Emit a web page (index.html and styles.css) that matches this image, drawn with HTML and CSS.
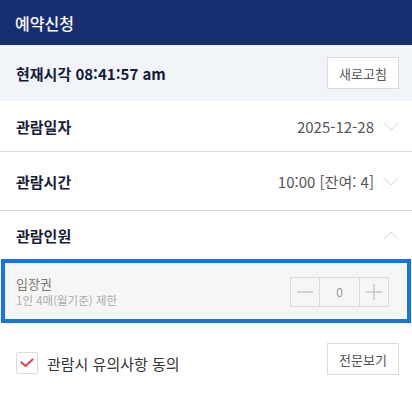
FILE: index.html
```html
<!DOCTYPE html>
<html lang="ko">
<head>
<meta charset="utf-8">
<title>예약신청</title>
<link rel="stylesheet" href="styles.css">
</head>
<body>
<header class="top">예약신청</header>
<div class="clock">
  <span class="clock-text">현재시각 08:41:57 am</span>
  <button class="btn">새로고침</button>
</div>
<div class="row row-date">
  <span class="label">관람일자</span>
  <span class="value">2025-12-28
    <svg class="chev" width="16" height="9" viewBox="0 0 16 9"><polyline points="0.5,0.5 8,8 15.5,0.5" fill="none" stroke="#d4d4d4" stroke-width="1"/></svg>
  </span>
</div>
<div class="row row-time">
  <span class="label">관람시간</span>
  <span class="value">10:00 [잔여: 4]
    <svg class="chev" width="16" height="9" viewBox="0 0 16 9"><polyline points="0.5,0.5 8,8 15.5,0.5" fill="none" stroke="#d4d4d4" stroke-width="1"/></svg>
  </span>
</div>
<div class="row row-people">
  <span class="label">관람인원</span>
  <span class="value">
    <svg class="chev" width="16" height="9" viewBox="0 0 16 9"><polyline points="0.5,8.5 8,1 15.5,8.5" fill="none" stroke="#d4d4d4" stroke-width="1"/></svg>
  </span>
</div>
<div class="ticket">
  <div class="ticket-info">
    <div class="ticket-name">입장권</div>
    <div class="ticket-note">1인 4매(월기준) 제한</div>
  </div>
  <div class="counter">
    <span class="cnt-btn"><svg width="16" height="16" viewBox="0 0 16 16"><line x1="0" y1="8" x2="16" y2="8" stroke="#bdbdbd" stroke-width="1.2"/></svg></span>
    <span class="cnt-val">0</span>
    <span class="cnt-btn"><svg width="16" height="16" viewBox="0 0 16 16"><line x1="0" y1="8" x2="16" y2="8" stroke="#bdbdbd" stroke-width="1.2"/><line x1="8" y1="0" x2="8" y2="16" stroke="#bdbdbd" stroke-width="1.2"/></svg></span>
  </div>
</div>
<div class="agree">
  <label class="agree-check">
    <span class="box"><svg width="14" height="10" viewBox="0 0 14 10"><polyline points="1.5,4.5 5.5,8 12.5,1.5" fill="none" stroke="#d9484c" stroke-width="2.2" stroke-linecap="round" stroke-linejoin="round"/></svg></span>
    <span class="agree-text">관람시 유의사항 동의</span>
  </label>
  <button class="btn">전문보기</button>
</div>
</body>
</html>
```
FILE: styles.css
```css
* { box-sizing: border-box; }
body {
  margin: 0;
  background: #fff;
  font-family: "Noto Sans CJK KR", "Noto Sans", sans-serif;
  color: #1b1f3b;
}
.top {
  height: 45px;
  background: #172e73;
  color: #fff;
  font-size: 16px;
  font-weight: 500;
  display: flex;
  align-items: center;
  padding-left: 15px;
}
.clock {
  height: 56px;
  background: #f1f5fa;
  display: flex;
  align-items: center;
  justify-content: space-between;
  padding: 0 13px 0 16px;
}
.clock-text {
  font-size: 15px;
  font-weight: 700;
  color: #131a38;
}
.btn {
  width: 72px;
  height: 32px;
  background: #fff;
  border: 1px solid #dcdcdc;
  color: #555;
  font-family: inherit;
  font-size: 13px;
  padding: 0;
}
.row {
  display: flex;
  align-items: center;
  justify-content: space-between;
  padding: 0 13px 0 16px;
  border-bottom: 1px solid #dcdcdc;
}
.row-date { height: 51px; }
.row-time { height: 59px; }
.row-people { height: 48px; border-bottom: none; }
.label {
  font-size: 15px;
  font-weight: 700;
  color: #181d3a;
}
.value {
  display: flex;
  align-items: center;
  gap: 9px;
  font-size: 15px;
  color: #555;
}
.chev { display: block; }
.ticket {
  margin: 0 1px;
  height: 64px;
  border: 4px solid #1874e4;
  background: #f7f6f5;
  display: flex;
  align-items: center;
  justify-content: space-between;
  padding: 0 18px 0 11px;
}
.ticket-name {
  font-size: 13px;
  color: #777;
  line-height: 17px;
}
.ticket-note {
  font-size: 11.5px;
  color: #aaa;
  line-height: 16px;
}
.counter {
  display: flex;
  height: 30px;
  border: 1px solid #dadada;
  margin-top: 1px;
}
.cnt-btn {
  width: 28px;
  display: flex;
  align-items: center;
  justify-content: center;
}
.cnt-val {
  width: 41px;
  border-left: 1px solid #dadada;
  border-right: 1px solid #dadada;
  display: flex;
  align-items: center;
  justify-content: center;
  font-size: 12px;
  color: #999;
}
.agree {
  display: flex;
  align-items: flex-start;
  justify-content: space-between;
  padding: 20px 13px 0 16px;
}
.agree-check {
  display: flex;
  align-items: center;
  gap: 9px;
  margin-top: 9px;
}
.box {
  width: 22px;
  height: 22px;
  border: 1px solid #dcdcdc;
  border-radius: 2px;
  background: #fff;
  display: flex;
  align-items: center;
  justify-content: center;
}
.agree-text {
  font-size: 15px;
  color: #333;
}
```
